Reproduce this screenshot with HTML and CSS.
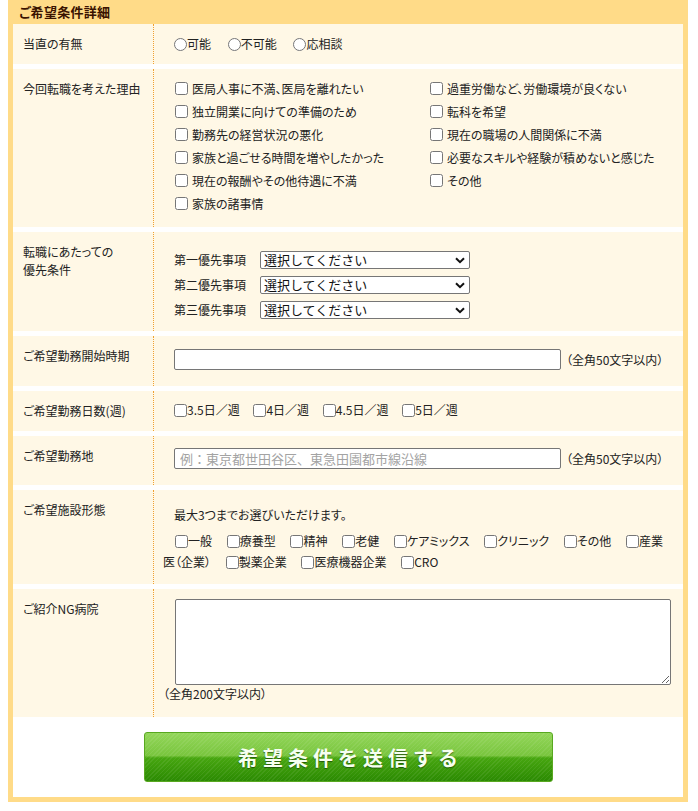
FILE: index.html
```html
<!DOCTYPE html>
<html lang="ja">
<head>
<meta charset="utf-8">
<title>ご希望条件詳細</title>
<link rel="stylesheet" href="styles.css">
</head>
<body>
<div class="box">
  <h2 class="box-title">ご希望条件詳細</h2>

  <div class="row r1">
    <div class="th">当直の有無</div>
    <div class="td">
      <label class="inl"><input type="radio" name="duty">可能</label>
      <label class="inl"><input type="radio" name="duty">不可能</label>
      <label class="inl"><input type="radio" name="duty">応相談</label>
    </div>
  </div>

  <div class="row r2">
    <div class="th">今回転職を考えた理由</div>
    <div class="td">
      <div class="reasons">
        <label><input type="checkbox">医局人事に不満、医局を離れたい</label>
        <label><input type="checkbox">過重労働など、労働環境が良くない</label>
        <label><input type="checkbox">独立開業に向けての準備のため</label>
        <label><input type="checkbox">転科を希望</label>
        <label><input type="checkbox">勤務先の経営状況の悪化</label>
        <label><input type="checkbox">現在の職場の人間関係に不満</label>
        <label><input type="checkbox">家族と過ごせる時間を増やしたかった</label>
        <label><input type="checkbox">必要なスキルや経験が積めないと感じた</label>
        <label><input type="checkbox">現在の報酬やその他待遇に不満</label>
        <label><input type="checkbox">その他</label>
        <label><input type="checkbox">家族の諸事情</label>
      </div>
    </div>
  </div>

  <div class="row r3">
    <div class="th">転職にあたっての<br>優先条件</div>
    <div class="td">
      <div class="prio">
        <span class="prio-label">第一優先事項</span>
        <span class="sel-wrap">
          <select class="sel"><option>選択してください</option></select>
          <svg class="chev" width="10" height="7" viewBox="0 0 10 7"><path d="M1 1.2l4 4 4-4" fill="none" stroke="#111" stroke-width="2"/></svg>
        </span>
      </div>
      <div class="prio">
        <span class="prio-label">第二優先事項</span>
        <span class="sel-wrap">
          <select class="sel"><option>選択してください</option></select>
          <svg class="chev" width="10" height="7" viewBox="0 0 10 7"><path d="M1 1.2l4 4 4-4" fill="none" stroke="#111" stroke-width="2"/></svg>
        </span>
      </div>
      <div class="prio">
        <span class="prio-label">第三優先事項</span>
        <span class="sel-wrap">
          <select class="sel"><option>選択してください</option></select>
          <svg class="chev" width="10" height="7" viewBox="0 0 10 7"><path d="M1 1.2l4 4 4-4" fill="none" stroke="#111" stroke-width="2"/></svg>
        </span>
      </div>
    </div>
  </div>

  <div class="row r4">
    <div class="th">ご希望勤務開始時期</div>
    <div class="td">
      <div class="field"><input type="text" class="txt"><span class="note">（全角50文字以内）</span></div>
    </div>
  </div>

  <div class="row r5">
    <div class="th">ご希望勤務日数(週)</div>
    <div class="td">
      <label class="inl"><input type="checkbox">3.5日／週</label>
      <label class="inl"><input type="checkbox">4日／週</label>
      <label class="inl"><input type="checkbox">4.5日／週</label>
      <label class="inl"><input type="checkbox">5日／週</label>
    </div>
  </div>

  <div class="row r6">
    <div class="th">ご希望勤務地</div>
    <div class="td">
      <div class="field"><input type="text" class="txt" placeholder="例：東京都世田谷区、東急田園都市線沿線"><span class="note">（全角50文字以内）</span></div>
    </div>
  </div>

  <div class="row r7">
    <div class="th">ご希望施設形態</div>
    <div class="td">
      <p class="lead">最大3つまでお選びいただけます。</p>
      <div class="facilities">
        <label class="inl"><input type="checkbox">一般</label>
        <label class="inl"><input type="checkbox">療養型</label>
        <label class="inl"><input type="checkbox">精神</label>
        <label class="inl"><input type="checkbox">老健</label>
        <label class="inl"><input type="checkbox">ケアミックス</label>
        <label class="inl"><input type="checkbox">クリニック</label>
        <label class="inl"><input type="checkbox">その他</label>
        <label class="inl"><input type="checkbox"><span>産業</span><span>医（企業）</span></label>
        <label class="inl"><input type="checkbox">製薬企業</label>
        <label class="inl"><input type="checkbox">医療機器企業</label>
        <label class="inl"><input type="checkbox">CRO</label>
      </div>
    </div>
  </div>

  <div class="row r8">
    <div class="th">ご紹介NG病院</div>
    <div class="td">
      <textarea class="area"></textarea>
      <div class="note-below">（全角200文字以内）</div>
    </div>
  </div>

  <div class="submit-area">
    <button type="submit" class="submit">希望条件を送信する</button>
  </div>
</div>
</body>
</html>
```

FILE: styles.css
```css
* {
  box-sizing: border-box;
}

html,
body {
  margin: 0;
  padding: 0;
  background: #ffffff;
}

body {
  padding: 0 8px 10px;
  font-family: "Noto Sans CJK JP", "Noto Sans", sans-serif;
  font-size: 12px;
  line-height: 18px;
  color: #222222;
  font-feature-settings: "palt";
}

.box {
  width: 680px;
  border: 5px solid #ffdb88;
  border-top: 0;
  background: #ffffff;
}

.box-title {
  margin: 0;
  height: 24px;
  line-height: 24px;
  padding-left: 6px;
  background: #ffdb88;
  font-size: 13px;
  font-weight: bold;
  color: #3a1200;
  letter-spacing: 0.3px;
}

.row {
  display: flex;
  background: #fff8e6;
  margin-top: 5px;
}

.row.r1 {
  margin-top: 0;
}

.th {
  flex: none;
  width: 141px;
  padding: 11px 0 0 10px;
  border-right: 1px dotted #f0a030;
  line-height: 18px;
}

.td {
  flex: 1;
  padding: 0 10px 0 9px;
}

/* inline radio / checkbox labels */
.inl input {
  margin: 0 0 0 11px;
  width: 13px;
  height: 13px;
  vertical-align: -2px;
}

.r1 .td {
  padding-top: 11px;
  padding-bottom: 11px;
}

.r1 .inl {
  margin-right: 3px;
}

/* reasons */
.r2 .td {
  padding-top: 8px;
  padding-bottom: 12px;
}

.reasons {
  display: grid;
  grid-template-columns: 255px 255px;
  grid-auto-rows: 23px;
  margin-left: 12px;
}

.reasons label {
  display: flex;
  align-items: center;
  gap: 4px;
}

.reasons input {
  margin: 0;
  width: 13px;
  height: 13px;
}

/* priorities */
.r3 .td {
  padding-top: 19px;
  padding-bottom: 12px;
}

.prio {
  display: flex;
  align-items: center;
  height: 18px;
  margin-left: 11px;
}

.prio + .prio {
  margin-top: 7px;
}

.prio-label {
  width: 86px;
  flex: none;
}

.sel-wrap {
  position: relative;
  display: block;
  width: 210px;
  height: 18px;
}

.sel {
  -webkit-appearance: none;
  appearance: none;
  display: block;
  width: 210px;
  height: 18px;
  margin: 0;
  padding: 0 16px 0 3px;
  border: 1px solid #767676;
  border-radius: 2px;
  background: #ffffff;
  font-family: "Noto Sans CJK JP", "Noto Sans", sans-serif;
  font-size: 13px;
  line-height: 16px;
  color: #111111;
}

.chev {
  position: absolute;
  right: 5px;
  top: 6px;
  pointer-events: none;
}

/* text fields */
.r4 .td {
  padding-top: 13px;
  padding-bottom: 16px;
}

.r6 .td {
  padding-top: 12px;
  padding-bottom: 16px;
}

.field {
  display: flex;
  align-items: center;
  margin-left: 11px;
}

.txt {
  width: 387px;
  height: 21px;
  margin: 0;
  padding: 0 5px;
  border: 1px solid #767676;
  border-radius: 2px;
  background: #ffffff;
  font-family: "Noto Sans CJK JP", "Noto Sans", sans-serif;
  font-size: 13px;
  color: #222222;
}

.txt::placeholder {
  color: #a3a3a3;
}

.note {
  margin-left: 5px;
  font-size: 12px;
}

/* days */
.r5 .td {
  padding-top: 10px;
  padding-bottom: 12px;
}

.r5 .inl {
  margin-right: 0;
}

/* facilities */
.r7 .td {
  padding-top: 16px;
  padding-bottom: 12px;
}

.lead {
  margin: 0 0 6px 11px;
  line-height: 18px;
}

.facilities {
  line-height: 21px;
}

.facilities .inl input {
  margin-left: 12px;
}

/* NG hospitals */
.r8 .td {
  padding-top: 10px;
  padding-bottom: 14px;
}

.area {
  display: block;
  width: 496px;
  height: 86px;
  margin: 0 0 0 12px;
  border: 1px solid #767676;
  border-radius: 2px;
  background: #ffffff;
  resize: both;
}

.note-below {
  font-size: 12px;
  line-height: 18px;
}

/* submit */
.submit-area {
  padding: 15px 0;
  text-align: center;
  background: #ffffff;
}

.submit {
  display: inline-block;
  width: 409px;
  height: 50px;
  margin: 0;
  padding: 0 0 0 5px;
  border: 1px solid #58a820;
  border-radius: 3px;
  background:
    repeating-linear-gradient(135deg, rgba(255, 255, 255, 0.07) 0 1px, rgba(255, 255, 255, 0) 1px 3px),
    linear-gradient(#93d65a 0%, #79c53e 47%, #47a610 52%, #2b8a02 100%);
  font-family: "Noto Sans CJK JP", "Noto Sans", sans-serif;
  font-size: 20px;
  font-weight: bold;
  letter-spacing: 5px;
  color: #f6fff0;
  text-shadow: 0 1px 1px rgba(20, 60, 0, 0.7);
  cursor: pointer;
}
```
